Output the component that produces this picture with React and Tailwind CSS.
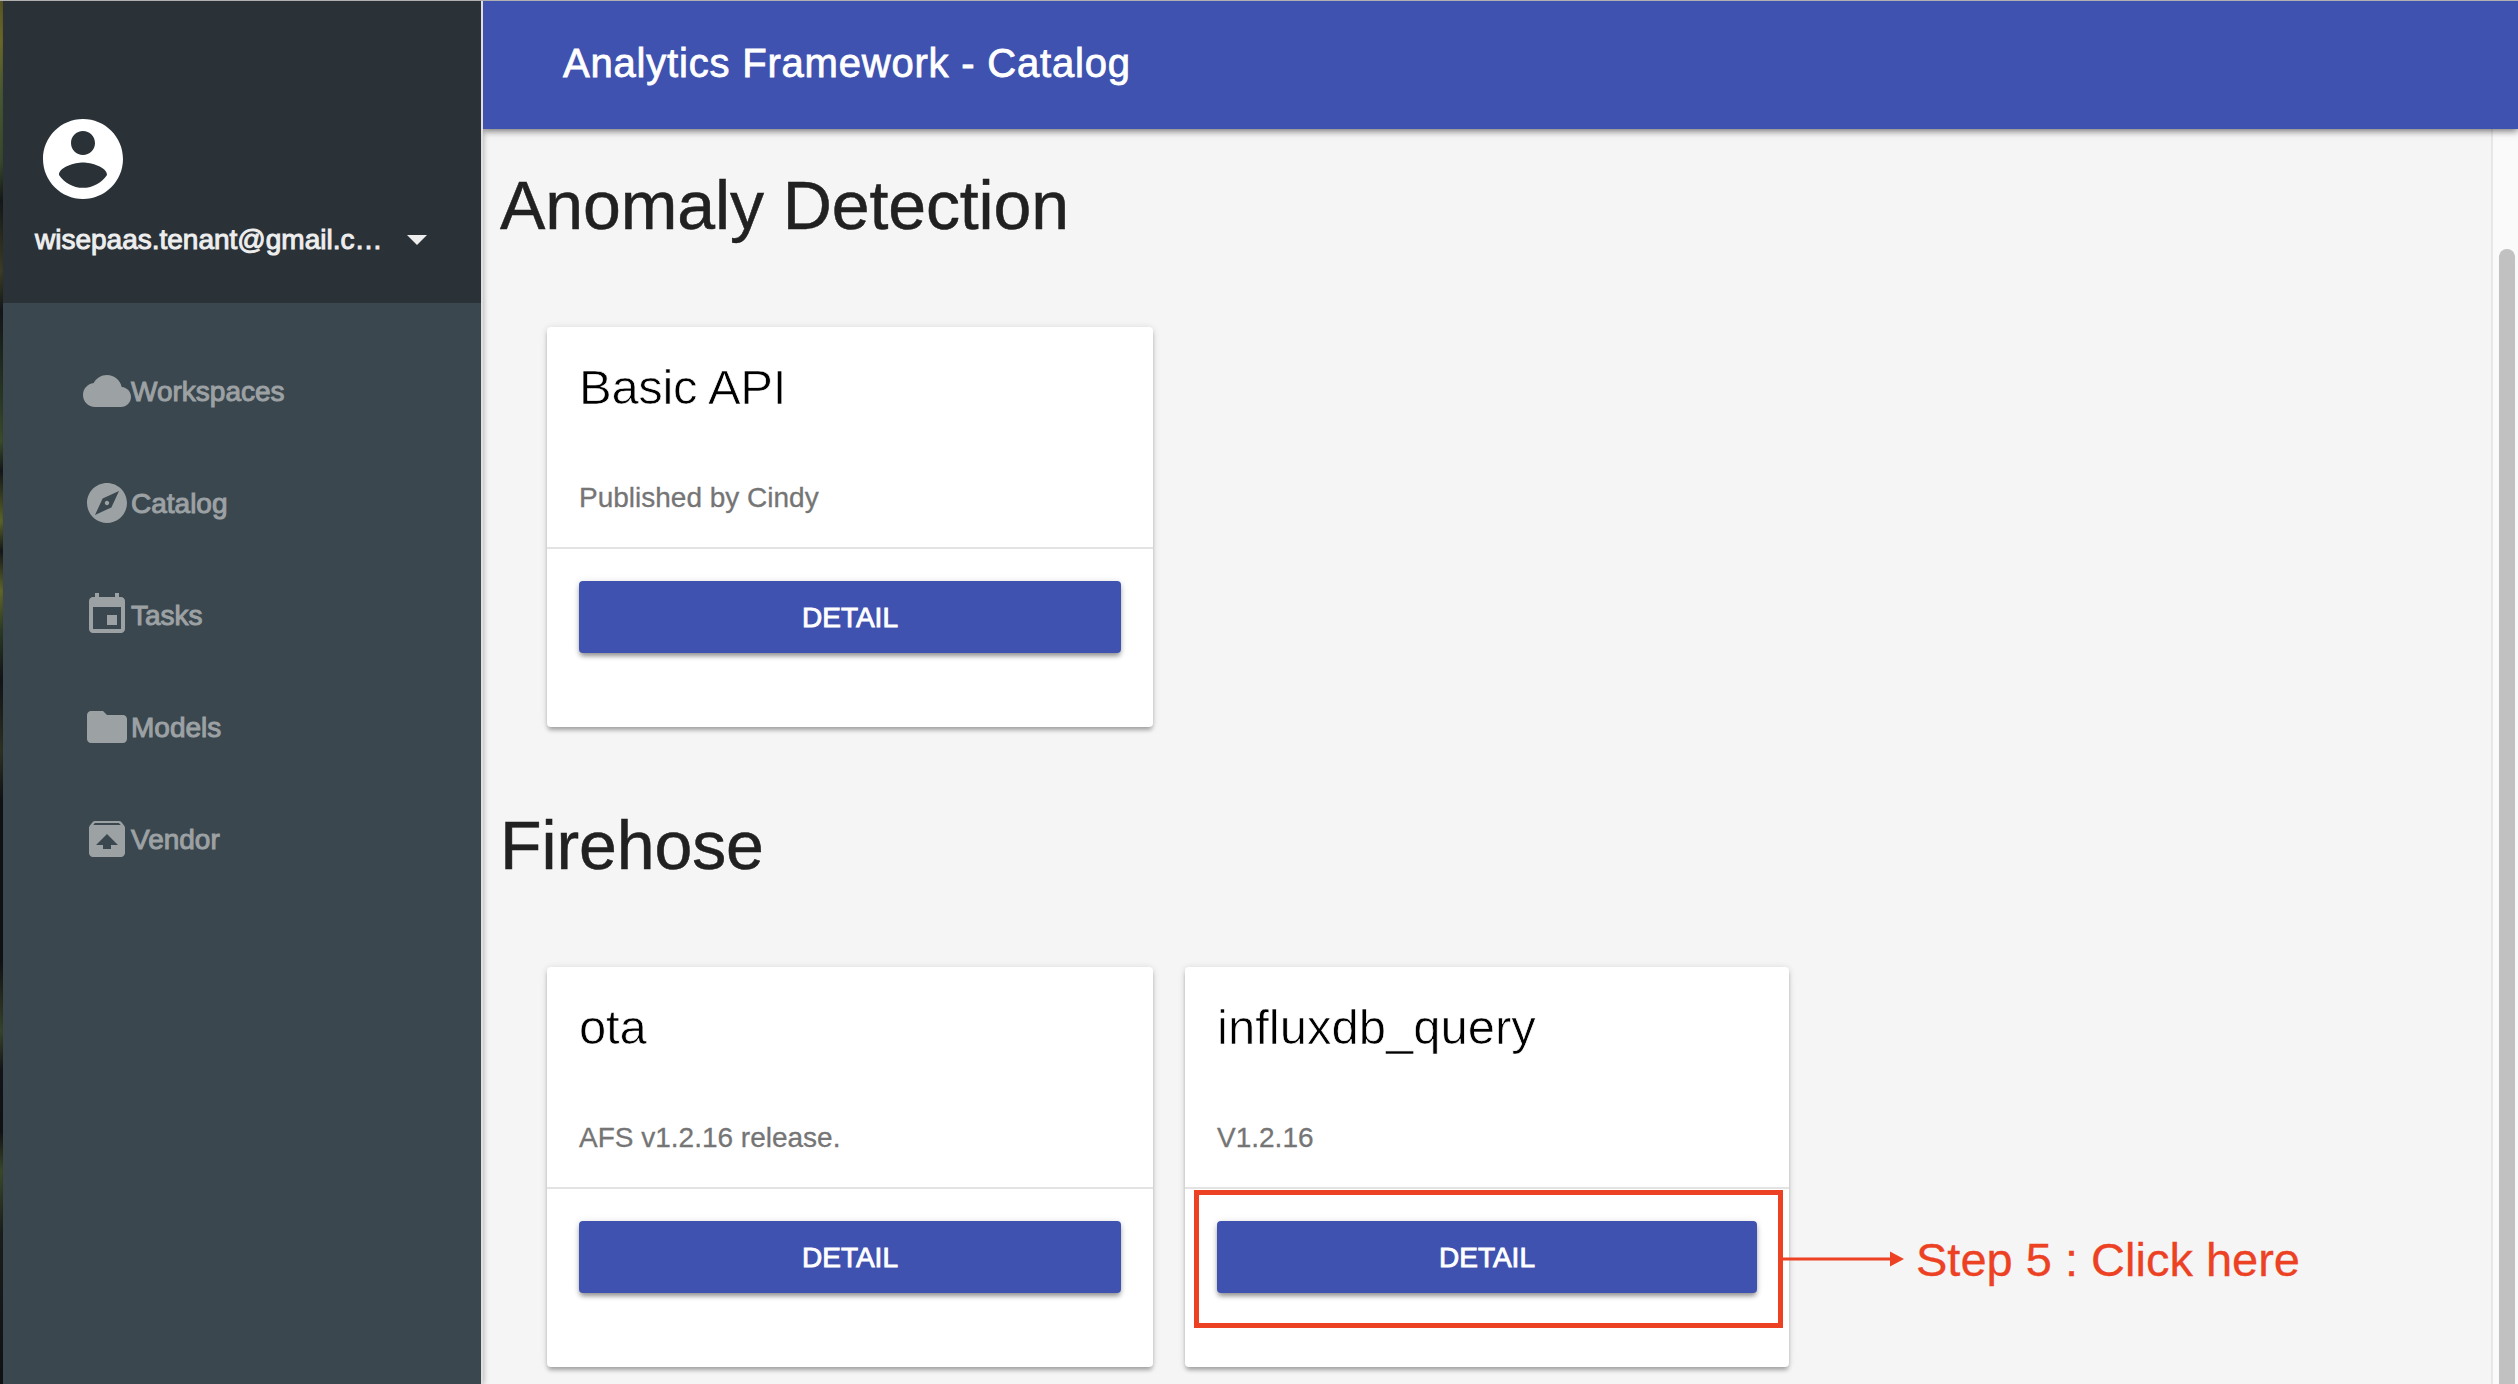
const icons = {
  account:
    'M12 2C6.48 2 2 6.48 2 12s4.48 10 10 10 10-4.48 10-10S17.52 2 12 2zm0 3c1.66 0 3 1.34 3 3s-1.34 3-3 3-3-1.34-3-3 1.34-3 3-3zm0 14.2c-2.5 0-4.71-1.28-6-3.22.03-1.99 4-3.08 6-3.08 1.99 0 5.97 1.09 6 3.08-1.29 1.94-3.5 3.22-6 3.22z',
  dropDown: 'M7 10l5 5 5-5z',
  cloud:
    'M19.35 10.04C18.67 6.59 15.64 4 12 4 9.11 4 6.6 5.64 5.35 8.04 2.34 8.36 0 10.91 0 14c0 3.31 2.69 6 6 6h13c2.76 0 5-2.24 5-5 0-2.64-2.05-4.78-4.65-4.96z',
  explore:
    'M12 10.9c-.61 0-1.1.49-1.1 1.1s.49 1.1 1.1 1.1c.61 0 1.1-.49 1.1-1.1s-.49-1.1-1.1-1.1zM12 2C6.48 2 2 6.48 2 12s4.48 10 10 10 10-4.48 10-10S17.52 2 12 2zm2.19 12.19L6 18l3.81-8.19L18 6l-3.81 8.19z',
  event:
    'M17 12h-5v5h5v-5zM16 1v2H8V1H6v2H5c-1.11 0-1.99.9-1.99 2L3 19c0 1.1.89 2 2 2h14c1.1 0 2-.9 2-2V5c0-1.1-.9-2-2-2h-1V1h-2zm3 18H5V8h14v11z',
  folder:
    'M10 4H4c-1.1 0-1.99.9-1.99 2L2 18c0 1.1.9 2 2 2h16c1.1 0 2-.9 2-2V8c0-1.1-.9-2-2-2h-8l-2-2z',
  unarchive:
    'M20.55 5.22l-1.39-1.68C18.88 3.21 18.47 3 18 3H6c-.47 0-.88.21-1.15.55L3.46 5.22C3.17 5.57 3 6.01 3 6.5V19c0 1.1.89 2 2 2h14c1.1 0 2-.9 2-2V6.5c0-.49-.17-.93-.45-1.28zM12 9.5l5.5 5.5H14v2h-4v-2H6.5L12 9.5zM5.12 5l.82-1h12l.93 1H5.12z',
};

function Icon({ name, className }) {
  return (
    <svg viewBox="0 0 24 24" fill="currentColor" className={className}>
      <path d={icons[name]} />
    </svg>
  );
}

const menu = [
  { icon: 'cloud', label: 'Workspaces' },
  { icon: 'explore', label: 'Catalog' },
  { icon: 'event', label: 'Tasks' },
  { icon: 'folder', label: 'Models' },
  { icon: 'unarchive', label: 'Vendor' },
];

function Sidebar() {
  return (
    <aside className="z-20 flex w-[480px] shrink-0 flex-col border-r-2 border-[#dfdfdf] bg-[#3b474e] shadow-[1px_0_5px_rgba(0,0,0,0.25)]">
      <div className="flex h-[302px] flex-col bg-[#2a3238] pt-[110px] pl-8">
        <Icon name="account" className="size-24 text-white" />
        <div className="mt-2 flex h-12 items-center text-[#eeeeee]">
          <span className="w-[358px] pt-0.5 text-[28px] leading-8 whitespace-nowrap [-webkit-text-stroke:1px_#eeeeee]">
            wisepaas.tenant@gmail.c…
          </span>
          <Icon name="dropDown" className="size-12" />
        </div>
      </div>
      <nav className="flex flex-col gap-16 pt-16 pl-20 text-[#9ca1a4]">
        {menu.map((item) => (
          <a key={item.label} className="flex h-12 items-center text-[28px] leading-8">
            <Icon name={item.icon} className="size-12" />
            <span className="pt-0.5 [-webkit-text-stroke:1px_#9ca1a4]">{item.label}</span>
          </a>
        ))}
      </nav>
    </aside>
  );
}

/* Red callout drawn over the button: frame, arrow and caption. */
function Callout() {
  return (
    <div className="absolute top-[223px] left-[9px] flex items-center text-[#ed4124]">
      <div className="h-[138px] w-[589px] shrink-0 border-[5px] border-[#ed4124]" />
      <svg viewBox="0 0 121 16" className="h-4 w-[121px] shrink-0" fill="currentColor">
        <path d="M0 6.5H107V0.5L121 8L107 15.5V9.5H0z" />
      </svg>
      <span className="ml-3 pt-0.5 text-[47px] leading-[56px] whitespace-nowrap [-webkit-text-stroke:0.3px_#ed4124]">
        Step 5 : Click here
      </span>
    </div>
  );
}

function Card({ title, note, width, titleClass, callout }) {
  return (
    <article
      className={`relative h-[400px] ${width} shrink-0 rounded-[4px] bg-white pt-8 shadow-[0_4px_4px_-1px_rgba(0,0,0,0.28),0_1px_7px_rgba(0,0,0,0.14)]`}
    >
      <h2
        className={`px-8 text-[49px] leading-[56px] text-black [-webkit-text-stroke:0.7px_white] ${titleClass}`}
      >
        {title}
      </h2>
      <p className="mt-[67px] px-8 text-[28px] leading-8 text-[#757575] [-webkit-text-stroke:0.3px_#757575]">
        {note}
      </p>
      <div className="mt-[33px] border-t-2 border-[#e3e3e3] px-8 pt-8">
        <button className="flex h-[72px] w-full items-center justify-center rounded-[4px] bg-[#4052af] pt-0.5 text-[28px] leading-8 text-white shadow-[0_4px_5px_-1px_rgba(0,0,0,0.38),0_1px_7px_rgba(0,0,0,0.14)] [-webkit-text-stroke:0.9px_white]">
          DETAIL
        </button>
      </div>
      {callout && <Callout />}
    </article>
  );
}

function Section({ title, children }) {
  return (
    <section className="pb-[78px]">
      <h1 className="pl-[17px] text-[68px] leading-[80px] tracking-[-0.1px] text-[#212121] [-webkit-text-stroke:0.5px_#212121]">
        {title}
      </h1>
      <div className="mt-[82px] flex gap-8 pl-16">{children}</div>
    </section>
  );
}

export default function App() {
  return (
    <div className="flex h-[1384px] w-[2518px] overflow-hidden border-t border-[#b0b0b0] bg-[#f5f5f5] font-['Liberation_Sans',Arial,sans-serif]">
      <div className="w-[3px] shrink-0 bg-[linear-gradient(180deg,#5b5724_0px,#6d6a2a_40px,#4a5a34_90px,#3a4a2c_160px,#15181a_200px,#3d3f25_270px,#14171a_310px,#2b3a26_400px,#3c4d2b_440px,#14171a_470px,#5d6628_520px,#14171a_550px,#63682b_590px,#2c3b25_630px,#121418_680px,#2d3324_750px,#101216_800px,#101216_960px,#39452b_1030px,#121519_1070px,#101216_1130px,#3c4a2a_1170px,#1a201d_1230px,#101216_1384px)]" />
      <Sidebar />
      <div className="flex min-w-0 flex-1 flex-col">
        <header className="z-30 h-32 shrink-0 bg-[#4052af] pt-[42px] pl-20 shadow-[0_2px_7px_rgba(0,0,0,0.55)] [clip-path:inset(0_0_-20px_0)]">
          <div className="text-[40px] leading-10 tracking-[0.8px] text-white [-webkit-text-stroke:0.8px_white]">
            Analytics Framework - Catalog
          </div>
        </header>
        <div className="flex min-h-0 flex-1">
          <main className="min-w-0 flex-1 overflow-hidden pt-9">
            <Section title="Anomaly Detection">
              <Card title="Basic API" note="Published by Cindy" width="w-[606px]" titleClass="tracking-[-0.3px]" />
            </Section>
            <Section title="Firehose">
              <Card title="ota" note="AFS v1.2.16 release." width="w-[606px]" titleClass="tracking-[-0.2px]" />
              <Card title="influxdb_query" note="V1.2.16" width="w-[604px]" titleClass="tracking-[0px]" callout />
            </Section>
          </main>
          <div className="w-[27px] shrink-0 border-l-2 border-[#e7e7e7] bg-[#fafafa] pt-[120px] pl-1.5">
            <div className="h-full w-4 rounded-t-full bg-[#c1c1c1]" />
          </div>
        </div>
      </div>
    </div>
  );
}
